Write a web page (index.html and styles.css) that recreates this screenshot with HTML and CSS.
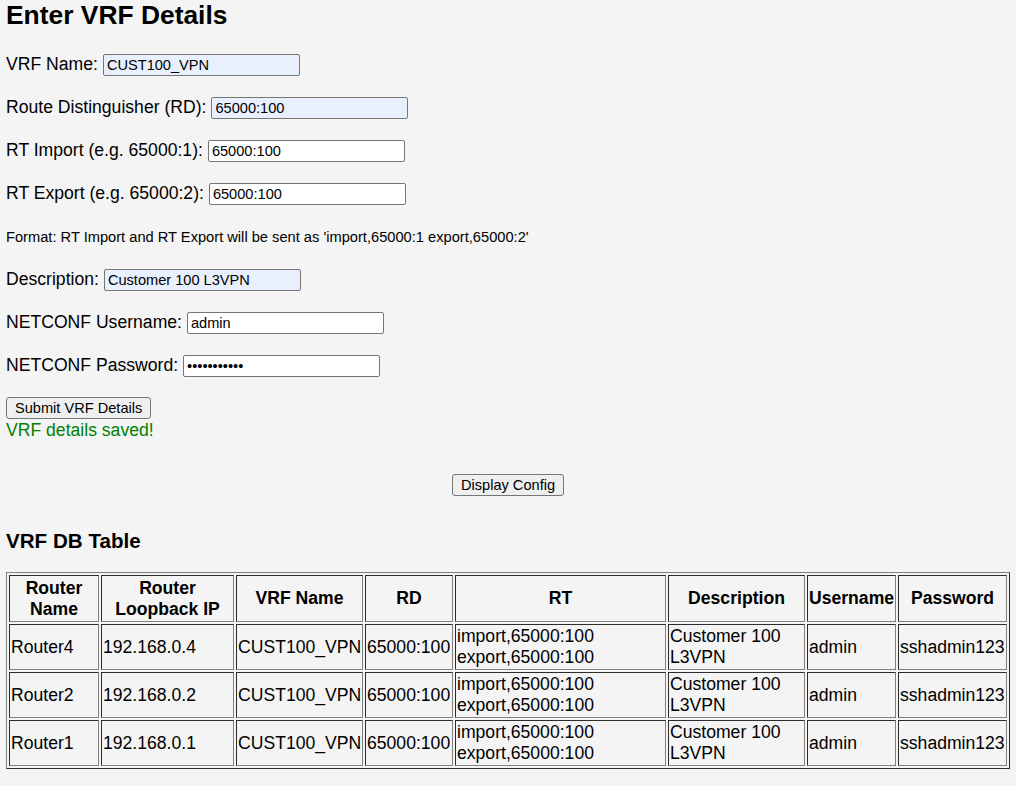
FILE: index.html
```html
<!DOCTYPE html>
<html>
<head>
<meta charset="utf-8">
<title>VRF Details</title>
<link rel="stylesheet" href="styles.css">
</head>
<body>
<h2 class="title">Enter VRF Details</h2>
<form class="vrf-form">
  <div class="row"><label>VRF Name:</label><input class="field autofill" type="text" value="CUST100_VPN"></div>
  <div class="row"><label>Route Distinguisher (RD):</label><input class="field autofill" type="text" value="65000:100"></div>
  <div class="row"><label>RT Import (e.g. 65000:1):</label><input class="field" type="text" value="65000:100"></div>
  <div class="row"><label>RT Export (e.g. 65000:2):</label><input class="field" type="text" value="65000:100"></div>
  <div class="row note">Format: RT Import and RT Export will be sent as 'import,65000:1 export,65000:2'</div>
  <div class="row"><label>Description:</label><input class="field autofill" type="text" value="Customer 100 L3VPN"></div>
  <div class="row"><label>NETCONF Username:</label><input class="field" type="text" value="admin"></div>
  <div class="row"><label>NETCONF Password:</label><input class="field" type="password" value="sshadmin123"></div>
  <div class="row"><button type="button" class="btn">Submit VRF Details</button></div>
</form>
<div class="saved">VRF details saved!</div>
<div class="center"><button type="button" class="btn">Display Config</button></div>
<h3 class="subtitle">VRF DB Table</h3>
<table class="db">
  <thead>
    <tr>
      <th class="c1">Router<br>Name</th>
      <th class="c2">Router<br>Loopback IP</th>
      <th class="c3">VRF Name</th>
      <th class="c4">RD</th>
      <th class="c5">RT</th>
      <th class="c6">Description</th>
      <th class="c7">Username</th>
      <th class="c8">Password</th>
    </tr>
  </thead>
  <tbody>
    <tr>
      <td>Router4</td><td>192.168.0.4</td><td>CUST100_VPN</td><td>65000:100</td>
      <td>import,65000:100<br>export,65000:100</td><td>Customer 100<br>L3VPN</td><td>admin</td><td>sshadmin123</td>
    </tr>
    <tr>
      <td>Router2</td><td>192.168.0.2</td><td>CUST100_VPN</td><td>65000:100</td>
      <td>import,65000:100<br>export,65000:100</td><td>Customer 100<br>L3VPN</td><td>admin</td><td>sshadmin123</td>
    </tr>
    <tr>
      <td>Router1</td><td>192.168.0.1</td><td>CUST100_VPN</td><td>65000:100</td>
      <td>import,65000:100<br>export,65000:100</td><td>Customer 100<br>L3VPN</td><td>admin</td><td>sshadmin123</td>
    </tr>
  </tbody>
</table>
</body>
</html>
```
FILE: styles.css
```css
html, body {
  margin: 0;
  padding: 0;
  background: #f4f4f4;
}
body {
  padding: 0 6px;
  font-family: "Liberation Sans", Arial, sans-serif;
  font-size: 17.6px;
  color: #000;
}
.title {
  margin: 0 0 23px 0;
  font-size: 26.4px;
  line-height: 30px;
  font-weight: bold;
}
.vrf-form {
  display: flex;
  flex-direction: column;
  gap: 21px;
  margin: 0;
}
.row {
  display: flex;
  align-items: baseline;
  gap: 5px;
  height: 22px;
}
.row label {
  line-height: 22px;
}
.note {
  box-sizing: border-box;
  padding-top: 2px;
  font-size: 14.67px;
  align-items: center;
  line-height: 20px;
}
.field {
  box-sizing: border-box;
  width: 197px;
  height: 22px;
  margin: 0;
  padding: 1px 3px;
  border: 1px solid #767676;
  border-radius: 2px;
  background: #fff;
  font-family: "Liberation Sans", Arial, sans-serif;
  font-size: 14.6px;
  color: #000;
}
.field.autofill {
  background: #e8f0fe;
}
.btn {
  box-sizing: border-box;
  height: 22px;
  margin: 0;
  padding: 0 8px;
  border: 1px solid #767676;
  border-radius: 3px;
  background: #efefef;
  font-family: "Liberation Sans", Arial, sans-serif;
  font-size: 14.6px;
  color: #000;
}
.saved {
  color: #008000;
  line-height: 22px;
}
.center {
  display: flex;
  justify-content: center;
  margin-top: 33px;
}
.subtitle {
  margin: 33px 0 19px 0;
  font-size: 20.6px;
  line-height: 24px;
  font-weight: bold;
}
.db {
  width: 100%;
  border-collapse: separate;
  border-spacing: 2px;
  border: 1px outset gray;
  table-layout: fixed;
  font-size: 17.6px;
}
.db th, .db td {
  box-sizing: border-box;
  border: 1px inset gray;
  padding: 1px;
  line-height: 21px;
  vertical-align: middle;
  white-space: nowrap;
}
.db th {
  text-align: center;
  font-weight: bold;
  height: 47px;
}
.db td {
  text-align: left;
  height: 46px;
}
.c1 { width: 90px; }
.c2 { width: 133px; }
.c3 { width: 127px; }
.c4 { width: 88px; }
.c5 { width: 211px; }
.c6 { width: 137px; }
.c7 { width: 89px; }
.c8 { width: 109px; }
```
